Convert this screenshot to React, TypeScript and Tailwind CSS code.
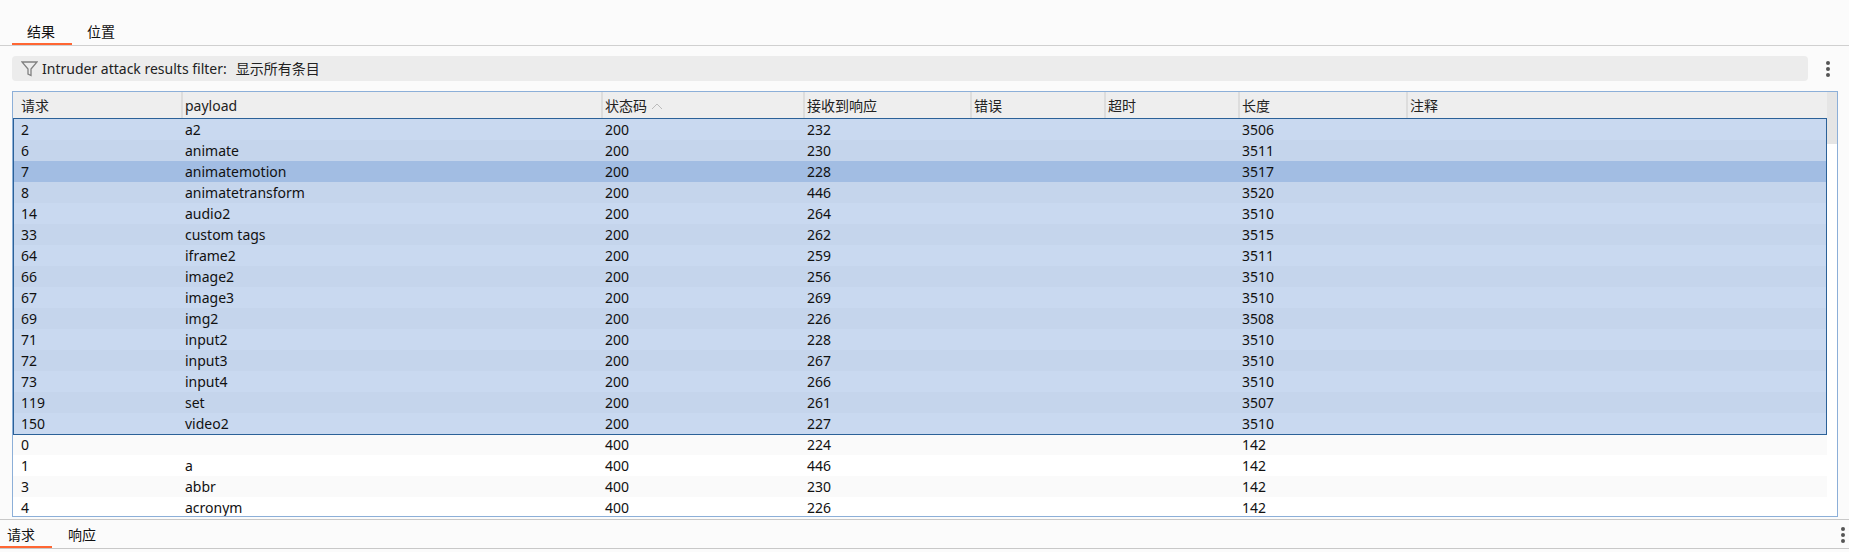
const font = { fontFamily: '"Noto Sans", "Noto Sans CJK SC", sans-serif' }

const columns = ['请求', 'payload', '状态码', '接收到响应', '错误', '超时', '长度', '注释']

type Result = [string, string, string, string, string]

const selected: Result[] = [
  ['2', 'a2', '200', '232', '3506'],
  ['6', 'animate', '200', '230', '3511'],
  ['7', 'animatemotion', '200', '228', '3517'],
  ['8', 'animatetransform', '200', '446', '3520'],
  ['14', 'audio2', '200', '264', '3510'],
  ['33', 'custom tags', '200', '262', '3515'],
  ['64', 'iframe2', '200', '259', '3511'],
  ['66', 'image2', '200', '256', '3510'],
  ['67', 'image3', '200', '269', '3510'],
  ['69', 'img2', '200', '226', '3508'],
  ['71', 'input2', '200', '228', '3510'],
  ['72', 'input3', '200', '267', '3510'],
  ['73', 'input4', '200', '266', '3510'],
  ['119', 'set', '200', '261', '3507'],
  ['150', 'video2', '200', '227', '3510'],
]

const rest: Result[] = [
  ['0', '', '400', '224', '142'],
  ['1', 'a', '400', '446', '142'],
  ['3', 'abbr', '400', '230', '142'],
  ['4', 'acronym', '400', '226', '142'],
]

const cols = 'grid grid-cols-[168px_420px_202px_167px_134px_134px_168px_1fr]'

function Dots() {
  return (
    <div className="flex flex-col gap-[2px]">
      <span className="h-[4px] w-[4px] rounded-full bg-[#555555]" />
      <span className="h-[4px] w-[4px] rounded-full bg-[#555555]" />
      <span className="h-[4px] w-[4px] rounded-full bg-[#555555]" />
    </div>
  )
}

function Row({ row, className }: { row: Result; className: string }) {
  return (
    <div className={`${cols} h-[21px] items-center leading-[21px] text-[#111111] ${className}`}>
      <div className="pl-[8px]">{row[0]}</div>
      <div className="pl-[4px]">{row[1]}</div>
      <div className="pl-[4px]">{row[2]}</div>
      <div className="pl-[4px]">{row[3]}</div>
      <div />
      <div />
      <div className="pl-[4px]">{row[4]}</div>
      <div />
    </div>
  )
}

export default function App() {
  return (
    <div className="h-[552px] w-[1849px] overflow-hidden bg-[#fbfbfb] text-[14px]" style={font}>
      <div className="flex h-[46px] items-end border-b border-[#d0d0d0] pl-[12px]">
        <div className="flex h-[28px] w-[60px] items-center justify-center border-b-2 border-[#ff6633] pr-[2px] pt-[2px] text-[#111111]">
          结果
        </div>
        <div className="flex h-[28px] w-[60px] items-center justify-center pr-[2px] text-[#111111]">位置</div>
      </div>

      <div className="mt-[10px] flex items-center pl-[12px]">
        <div className="flex h-[25px] w-[1796px] items-center rounded-[4px] bg-[#ececec] pl-[9px] text-[#222222]">
          <svg width="17" height="17" viewBox="0 0 17 17" fill="none" stroke="#808080" strokeWidth="1.3">
            <path d="M1 2h15L10 9v6.5l-3-1.5V9z" />
          </svg>
          <span className="ml-[4px]">Intruder attack results filter:</span>
          <span className="ml-[9px]">显示所有条目</span>
        </div>
        <div className="ml-[18px]">
          <Dots />
        </div>
      </div>

      <div className="ml-[12px] mt-[10px] flex h-[426px] w-[1826px] border border-[#8cafd8] bg-white">
        <div className="w-[1814px] overflow-hidden">
          <div className={`${cols} h-[26px] items-center bg-[#eeeeee] text-[#222222]`}>
            {columns.map((c, i) => (
              <div
                key={c}
                className={`flex h-full items-center border-[#dddddd] pt-[1px] ${i === 0 ? 'pl-[8px]' : 'border-l-2 pl-[2px]'}`}
              >
                {c}
                {c === '状态码' && (
                  <svg className="ml-[4px]" width="12" height="8" viewBox="0 0 12 8" fill="none" stroke="#bbbbbb">
                    <path d="M1 7l5-5 5 5" />
                  </svg>
                )}
              </div>
            ))}
          </div>
          <div className="relative">
            <div className="pointer-events-none absolute inset-x-0 top-0 h-[317px] border border-[#2b6198]" />
            <div className="pt-[1px]">
              {selected.map((r, i) => (
                <Row
                  key={r[0]}
                  row={r}
                  className={r[0] === '7' ? 'bg-[#a2bde3]' : i % 2 === 0 ? 'bg-[#c9d9f0]' : 'bg-[#c5d5ec]'}
                />
              ))}
              {rest.map((r, i) => (
                <Row key={r[0]} row={r} className={i % 2 === 0 ? 'bg-[#fafafa]' : 'bg-white'} />
              ))}
            </div>
          </div>
        </div>
        <div className="w-[10px]">
          <div className="h-[52px] bg-[#e5e5e5]" />
        </div>
      </div>

      <div className="mt-[2px] flex h-[30px] items-end border-y border-[#c8c8c8] pr-[4px]">
        <div className="flex h-[27px] w-[52px] items-center border-b-2 border-[#ff6633] pl-[7px] pt-[2px] text-[#111111]">
          请求
        </div>
        <div className="flex h-[27px] items-center pl-[16px] text-[#111111]">响应</div>
        <div className="ml-auto mt-[2px] self-center">
          <Dots />
        </div>
      </div>
    </div>
  )
}
